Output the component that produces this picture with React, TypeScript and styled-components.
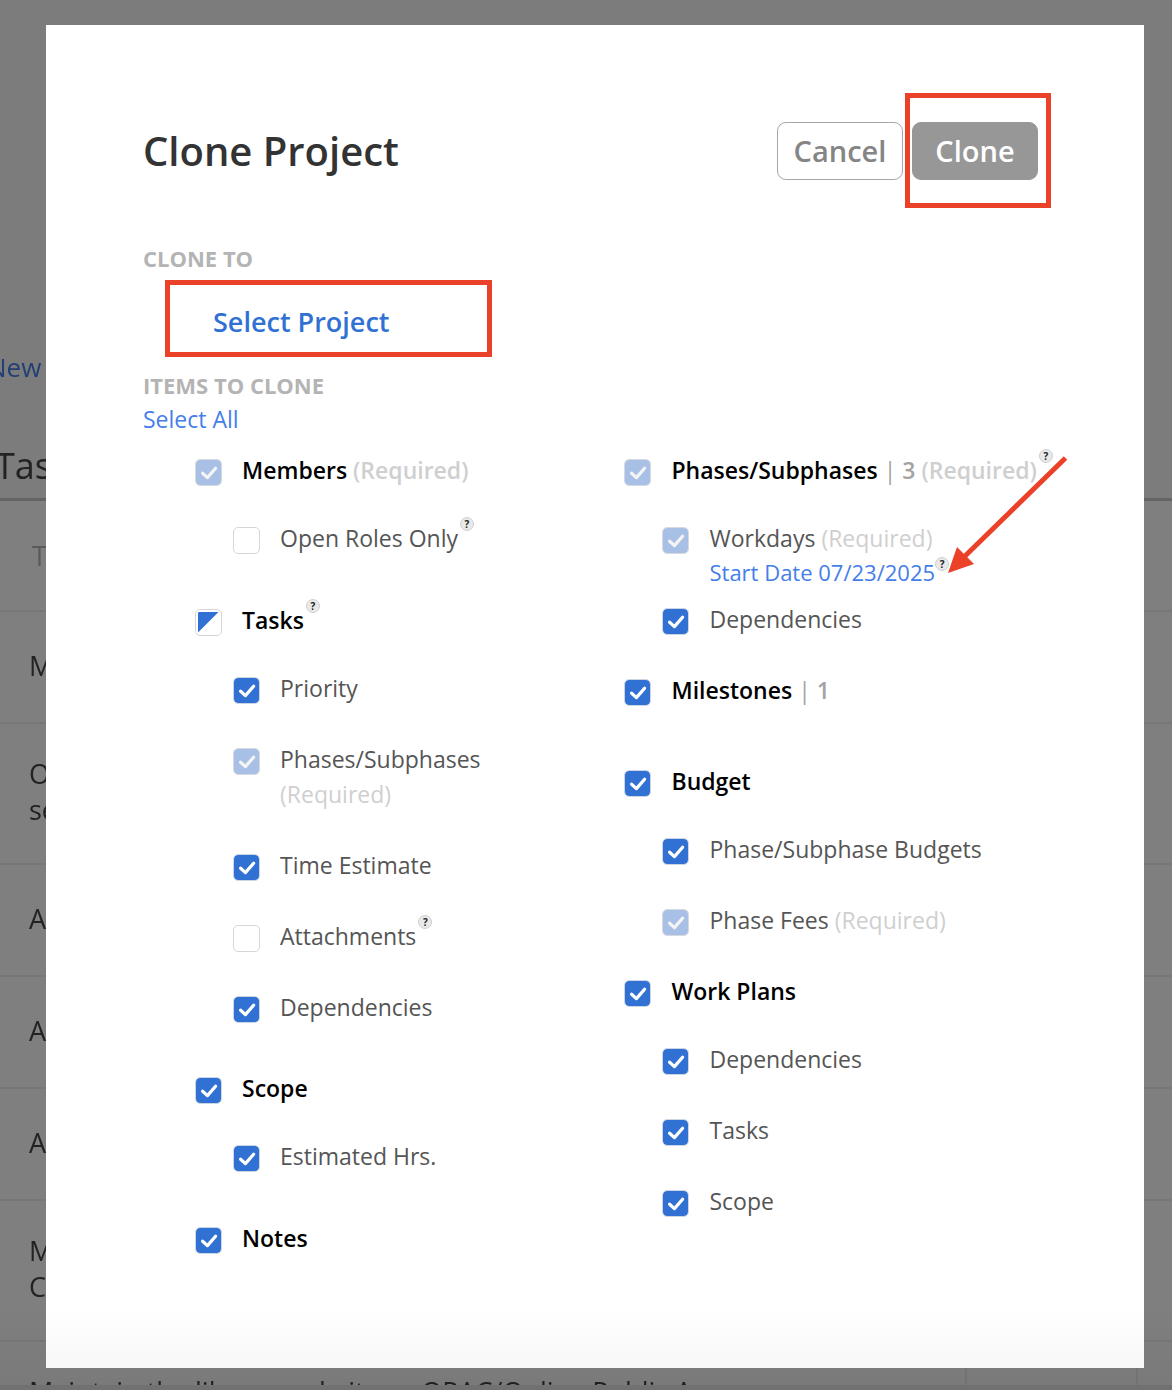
import React, { useEffect, useRef, useState } from "react";
import styled, { createGlobalStyle, css } from "styled-components";

const GlobalStyle = createGlobalStyle`
  *, *::before, *::after { box-sizing: border-box; }
  body {
    margin: 0;
    background: #f8f8f8;
    font-family: "Open Sans", "Noto Sans", sans-serif;
    font-size: 23px;
    color: #444;
  }
  button { font: inherit; cursor: pointer; }
`;

const colors = {
  blue: "#3171d3",
  link: "#457eea",
  red: "#ea4128",
  muted: "#b4b4b4",
  faint: "#cfcfcf",
};

/* ---------- page behind the dialog ---------- */

const Backdrop = styled.div`
  position: fixed;
  inset: 0;
  display: flex;
  flex-direction: column;

  &::after {
    content: "";
    position: absolute;
    inset: 0;
    background: rgba(0, 0, 0, 0.5);
  }
`;

const PageClip = styled.div`
  flex: 1;
  min-height: 0;
  overflow: hidden;
`;

const PageFoot = styled.div`
  height: 5px;
  flex: none;
  background: #ededed;
`;

const PageTools = styled.div`
  padding-top: 350px;
  margin-left: -13px;
  font-size: 26px;
  line-height: 34px;
`;

const PageLink = styled.a`
  color: ${colors.link};
  text-decoration: none;
`;

const PageTitle = styled.h2`
  margin: 52px 0 2px -5px;
  font-size: 36px;
  line-height: 60px;
  font-weight: 400;
`;

const TaskTable = styled.table`
  width: 100%;
  table-layout: fixed;
  border-collapse: separate;
  border-spacing: 0;
  border-top: 3px solid #c8c8c8;
  background: #fff;
  font-size: 27px;
  line-height: 36px;
  text-align: left;

  th, td {
    height: 112px;
    padding: 32px 0 35px;
    border-bottom: 2px solid #eee;
    font-weight: 400;
  }
  td:first-child { padding-left: 29px; }
  th { height: 111px; padding: 34px 0 34px 32px; color: #b4b4b4; }
  td + td { border-left: 2px solid #eee; }
`;

const NameHead = styled.th``;
const SideHead = styled.th<{ $width: number }>`
  width: ${(p) => p.$width}px;
`;

/* ---------- dialog ---------- */

const Scroller = styled.div`
  position: relative;
  min-height: 100vh;
  padding: 25px 28px 22px 46px;
  display: flex;
`;

const Dialog = styled.section`
  flex: 1;
  padding: 97px 80px 98px 97px;
  background: #fff;
`;

const BottomShade = styled.div`
  position: fixed;
  left: 0;
  right: 0;
  bottom: 0;
  height: 80px;
  background: linear-gradient(rgba(0, 0, 0, 0), rgba(0, 0, 0, 0.04));
  pointer-events: none;
`;

const Header = styled.header`
  display: flex;
  justify-content: space-between;
  align-items: center;
  padding-right: 26px;
`;

const Title = styled.h1`
  margin: 0;
  font-size: 40px;
  line-height: 58px;
  font-weight: 600;
  color: #333;
`;

const Actions = styled.div`
  display: flex;
  gap: 9px;
`;

const Button = styled.button<{ $solid?: boolean }>`
  width: 126px;
  height: 58px;
  padding: 0 0 2px;
  border: 1px solid ${(p) => (p.$solid ? "#979797" : "#a6a6a6")};
  border-radius: 9px;
  background: ${(p) => (p.$solid ? "#979797" : "#fff")};
  color: ${(p) => (p.$solid ? "#fff" : "#858585")};
  font-size: 29px;
  font-weight: 600;
`;

const Marked = styled.div`
  position: relative;
  display: flex;

  &::after {
    content: "";
    position: absolute;
    inset: -29px -13px -28px -7px;
    border: 5px solid ${colors.red};
    pointer-events: none;
  }
`;

const SectionTitle = styled.h2`
  margin: 0;
  font-size: 22px;
  line-height: 32px;
  font-weight: 700;
  color: ${colors.muted};
`;

const TargetSection = styled.section`
  padding-top: 62px;
`;

const TargetBox = styled.div`
  width: 327px;
  height: 77px;
  margin: 6px 0 12px 22px;
  padding: 7px 0 0 43px;
  border: 5px solid ${colors.red};
  display: flex;
  align-items: center;
`;

const SelectProject = styled.button`
  padding: 0;
  border: 0;
  background: none;
  color: ${colors.blue};
  font-size: 27px;
  line-height: 40px;
  font-weight: 600;
`;

const TextButton = styled.button<{ $size: number }>`
  display: inline-block;
  padding: 0;
  border: 0;
  background: none;
  color: ${colors.link};
  font-size: ${(p) => p.$size}px;
  line-height: 32px;
`;

const SelectAllRow = styled.div`
  display: flex;
  padding: 2px 0;
`;

const Columns = styled.div`
  display: grid;
  grid-template-columns: 429fr 439fr;
  padding: 16px 0 0 52px;
`;

const Column = styled.div`
  min-width: 0;
`;

const Group = styled.section<{ $after: number }>`
  margin-bottom: ${(p) => p.$after}px;
`;

const Subitems = styled.ul`
  margin: 33px 0 0;
  padding: 0 0 0 38px;
  list-style: none;
`;

const Subitem = styled.li<{ $after: number }>`
  margin-bottom: ${(p) => p.$after}px;

  &:last-child { margin-bottom: 0; }
`;

const Row = styled.div`
  display: flex;
  align-items: flex-start;
  gap: 20px;
`;

const CheckCell = styled.span`
  display: grid;
  flex: none;
  margin-top: 6px;

  > * { grid-area: 1 / 1; }
  > svg { pointer-events: none; }
`;

const CheckInput = styled.input`
  appearance: none;
  width: 27px;
  height: 27px;
  margin: 0;
  border: 1px solid #d6d6d6;
  border-radius: 5px;
  background: #fff;

  &:checked { background: ${colors.blue}; border-color: #ccd5e4; background-clip: padding-box; }
  &:checked:disabled { background: #a9c0e6; border-color: #d6d9df; background-clip: padding-box; }
`;

const LabelBlock = styled.div`
  position: relative;
  min-width: 0;
  line-height: 35px;
`;

const Label = styled.label<{ $strong?: boolean }>`
  color: #555;
  ${(p) => p.$strong && css`
    color: #000;
    font-weight: 600;
  `}
`;

const Required = styled.span<{ $block?: boolean }>`
  color: ${colors.faint};
  display: ${(p) => (p.$block ? "block" : "inline")};
`;

const Count = styled.span`
  color: #a3a3a3;
`;

const Divider = styled.span`
  font-weight: 400;
`;

const Help = styled.button<{ $low?: boolean }>`
  display: inline-grid;
  place-items: center;
  width: 14px;
  height: 14px;
  margin-top: -7px;
  margin-left: ${(p) => (p.$low ? 0 : 2)}px;
  padding: 0;
  border: 1px solid #d0d0d0;
  border-radius: 50%;
  background: #e9e9e9;
  color: #222;
  font-size: 10px;
  line-height: 12px;
  font-weight: 700;
  vertical-align: ${(p) => (p.$low ? 13 : 19)}px;
`;

const DateLine = styled.div`
  position: relative;
  width: max-content;
  line-height: 32px;
`;

const Arrow = styled.svg`
  position: absolute;
  left: 100%;
  bottom: 14px;
  margin-left: -1px;
  pointer-events: none;
`;

type State = "on" | "off" | "partial";

interface Item {
  id: string;
  text: string;
  state: State;
  locked?: boolean;
  wrap?: boolean;
  help?: string;
  count?: number;
  date?: string;
  after?: number;
}

interface GroupData extends Item {
  items: Item[];
}

const leftGroups: GroupData[] = [
  {
    id: "members", text: "Members", state: "on", locked: true, after: 47,
    items: [{ id: "open-roles", text: "Open Roles Only", state: "off", help: "About open roles" }],
  },
  {
    id: "tasks", text: "Tasks", state: "partial", help: "About tasks", after: 46,
    items: [
      { id: "priority", text: "Priority", state: "on" },
      { id: "task-phases", text: "Phases/Subphases", state: "on", locked: true, wrap: true },
      { id: "estimate", text: "Time Estimate", state: "on" },
      { id: "attachments", text: "Attachments", state: "off", help: "About attachments" },
      { id: "task-deps", text: "Dependencies", state: "on" },
    ],
  },
  {
    id: "scope", text: "Scope", state: "on", after: 47,
    items: [{ id: "hours", text: "Estimated Hrs.", state: "on" }],
  },
  { id: "notes", text: "Notes", state: "on", after: 0, items: [] },
];

const rightGroups: GroupData[] = [
  {
    id: "phases", text: "Phases/Subphases", state: "on", locked: true, count: 3, help: "About phases", after: 36,
    items: [
      { id: "workdays", text: "Workdays", state: "on", locked: true, date: "07/23/2025", after: 14 },
      { id: "phase-deps", text: "Dependencies", state: "on" },
    ],
  },
  { id: "milestones", text: "Milestones", state: "on", count: 1, after: 56, items: [] },
  {
    id: "budget", text: "Budget", state: "on", after: 36,
    items: [
      { id: "phase-budgets", text: "Phase/Subphase Budgets", state: "on" },
      { id: "phase-fees", text: "Phase Fees", state: "on", locked: true },
    ],
  },
  {
    id: "plans", text: "Work Plans", state: "on", after: 0,
    items: [
      { id: "plan-deps", text: "Dependencies", state: "on" },
      { id: "plan-tasks", text: "Tasks", state: "on" },
      { id: "plan-scope", text: "Scope", state: "on" },
    ],
  },
];

function Check({ item }: { item: Item }) {
  const [state, setState] = useState<State>(item.state);
  const ref = useRef<HTMLInputElement>(null);
  useEffect(() => {
    if (ref.current) ref.current.indeterminate = state === "partial";
  }, [state]);
  return (
    <CheckCell>
      <CheckInput
        ref={ref}
        id={item.id}
        type="checkbox"
        checked={state === "on"}
        disabled={item.locked}
        onChange={(e) => setState(e.target.checked ? "on" : "off")}
      />
      <svg width="27" height="27" viewBox="0 0 27 27" aria-hidden="true">
        {state === "on" && (
          <path
            d="M7.6 14.2 12.4 18.6 20.6 9.2"
            fill="none"
            stroke={item.locked ? "#f4f4f4" : "#fff"}
            strokeWidth="3.2"
            strokeLinecap="round"
            strokeLinejoin="round"
          />
        )}
        {state === "partial" && <path d="M3 4Q3 3 4 3H23.5L3 23.5Z" fill={colors.blue} />}
      </svg>
    </CheckCell>
  );
}

function ItemRow({ item, strong }: { item: Item; strong?: boolean }) {
  return (
    <Row>
      <Check item={item} />
      <LabelBlock>
        <Label htmlFor={item.id} $strong={strong}>
          {item.text}
          {item.count !== undefined && (
            <Count> <Divider>|</Divider> {item.count}</Count>
          )}
          {item.locked && !item.wrap && " "}
          {item.locked && <Required $block={item.wrap}>(Required)</Required>}
        </Label>
        {item.help && <Help type="button" aria-label={item.help}>?</Help>}
        {item.date && (
          <DateLine>
            <TextButton type="button" $size={22}>Start Date {item.date}</TextButton>
            <Help type="button" $low aria-label="About the start date">?</Help>
            <Arrow width="120" height="118" viewBox="0 0 120 118" aria-hidden="true">
              <path d="M117.5 2 15 102" stroke={colors.red} strokeWidth="5" />
              <path d="M0 117 9 91 26 108Z" fill={colors.red} />
            </Arrow>
          </DateLine>
        )}
      </LabelBlock>
    </Row>
  );
}

function GroupColumn({ groups }: { groups: GroupData[] }) {
  return (
    <Column>
      {groups.map((g) => (
        <Group key={g.id} $after={g.after ?? 0}>
          <ItemRow item={g} strong />
          {g.items.length > 0 && (
            <Subitems>
              {g.items.map((i) => (
                <Subitem key={i.id} $after={i.after ?? 36}>
                  <ItemRow item={i} />
                </Subitem>
              ))}
            </Subitems>
          )}
        </Group>
      ))}
    </Column>
  );
}

const taskRows: string[][] = [
  ["M"],
  ["O", "se"],
  ["A"],
  ["A"],
  ["A"],
  ["M", "C"],
  ["Maintain the library website or OPAC/Online Public Access", "Catalog"],
];

function TaskPage() {
  return (
    <Backdrop>
      <PageClip>
        <PageTools>
          <PageLink href="#new">New</PageLink>
        </PageTools>
        <PageTitle>Tas</PageTitle>
        <TaskTable>
          <thead>
            <tr>
              <NameHead>T</NameHead>
              <SideHead $width={171} />
              <SideHead $width={36} />
            </tr>
          </thead>
          <tbody>
            {taskRows.map((lines, n) => (
              <tr key={n}>
                <td>
                  {lines.map((line) => (
                    <div key={line}>{line}</div>
                  ))}
                </td>
                <td />
                <td />
              </tr>
            ))}
          </tbody>
        </TaskTable>
      </PageClip>
      <PageFoot />
    </Backdrop>
  );
}

export default function App() {
  return (
    <>
      <GlobalStyle />
      <TaskPage />
      <Scroller>
        <Dialog role="dialog" aria-labelledby="dialog-title">
          <Header>
            <Title id="dialog-title">Clone Project</Title>
            <Actions>
              <Button type="button">Cancel</Button>
              <Marked>
                <Button type="button" $solid>Clone</Button>
              </Marked>
            </Actions>
          </Header>
          <TargetSection>
            <SectionTitle>CLONE TO</SectionTitle>
            <TargetBox>
              <SelectProject type="button">Select Project</SelectProject>
            </TargetBox>
          </TargetSection>
          <SectionTitle>ITEMS TO CLONE</SectionTitle>
          <SelectAllRow>
            <TextButton type="button" $size={23}>Select All</TextButton>
          </SelectAllRow>
          <Columns>
            <GroupColumn groups={leftGroups} />
            <GroupColumn groups={rightGroups} />
          </Columns>
        </Dialog>
      </Scroller>
      <BottomShade />
    </>
  );
}
